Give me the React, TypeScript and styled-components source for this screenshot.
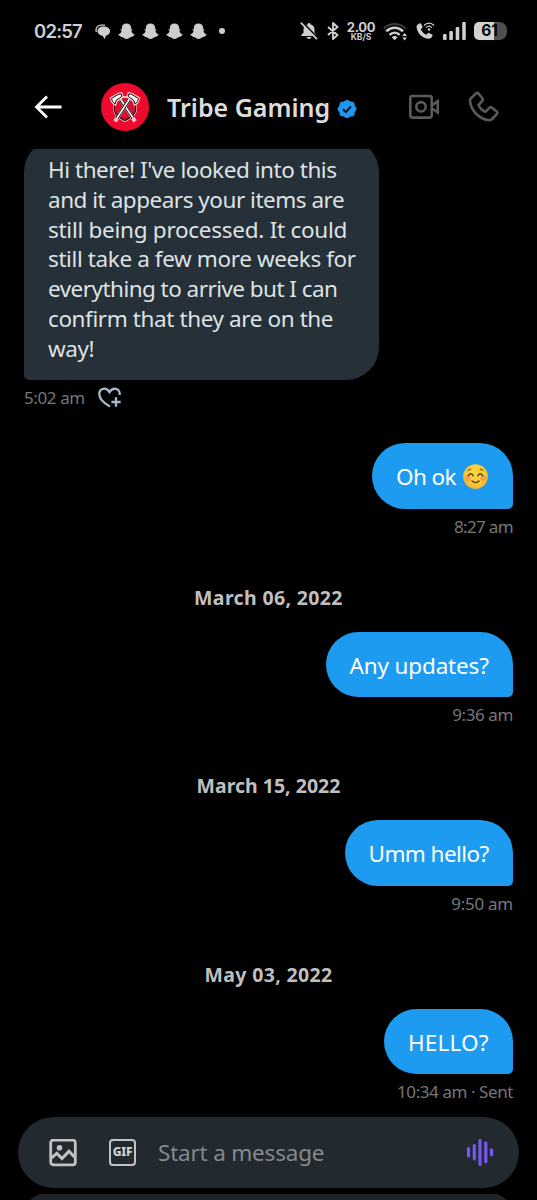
import React from "react";
import styled, { createGlobalStyle } from "styled-components";

const GlobalStyle = createGlobalStyle`
  *, *::before, *::after { box-sizing: border-box; }
  html, body { margin: 0; padding: 0; background: #000; }
  body { overflow: hidden; }
  svg { display: block; flex: none; }
`;

const Screen = styled.div`
  width: 537px;
  height: 1200px;
  overflow: hidden;
  background: #000;
  display: flex;
  flex-direction: column;
  font-family: "Noto Sans", "Open Sans", sans-serif;
  color: #dcdcdc;
`;

const StatusBar = styled.div`
  height: 62px;
  flex: none;
  padding: 0 30px 0 34px;
  display: flex;
  align-items: center;
  color: #cfcfcf;
  font-family: Inter, sans-serif;
`;

const Clock = styled.span`
  width: 61px;
  font-size: 18.5px;
  font-weight: 600;
  letter-spacing: -0.8px;
  white-space: nowrap;
`;

const Notifications = styled.div`
  display: flex;
  align-items: center;
  gap: 7px;
`;

const MoreDot = styled.span`
  width: 6px;
  height: 6px;
  margin-left: 5px;
  border-radius: 50%;
  background: #cfcfcf;
`;

const Indicators = styled.div`
  margin-left: auto;
  display: flex;
  align-items: center;
`;

const Speed = styled.div`
  width: 30px;
  margin: 0 7px 0 7px;
  display: flex;
  flex-direction: column;
  align-items: center;
  font-weight: 700;
  white-space: nowrap;
`;

const SpeedValue = styled.span`
  font-size: 13px;
  line-height: 12px;
  letter-spacing: -0.3px;
`;

const SpeedUnit = styled.span`
  font-size: 8.5px;
  line-height: 9px;
`;

const Battery = styled.div`
  width: 33px;
  height: 18px;
  margin-left: 8px;
  padding-right: 2px;
  border-radius: 5px 8px 8px 5px;
  background: linear-gradient(90deg, #d2d2d2 0 20px, #505050 20px);
  color: #080808;
  font-size: 15.5px;
  font-weight: 700;
  line-height: 18px;
  text-align: center;
`;

const Header = styled.header`
  height: 87px;
  flex: none;
  padding: 3px 38px 0 33px;
  display: flex;
  align-items: center;
`;

const Avatar = styled.div`
  width: 48px;
  height: 48px;
  margin: 0 18px 0 38px;
  border-radius: 50%;
  background: #ee0a2c;
  overflow: hidden;
`;

const Name = styled.h1`
  margin: 0 8px 0 0;
  width: 162px;
  font-size: 25px;
  font-weight: 600;
  line-height: 32px;
  white-space: nowrap;
`;

const Actions = styled.div`
  margin-left: auto;
  display: flex;
  align-items: center;
  gap: 28px;
`;

const Thread = styled.main`
  height: 968px;
  flex: none;
  padding: 0 24px;
  overflow: hidden;
  display: flex;
  flex-direction: column;
`;

const Bubble = styled.div<{ $sent?: boolean }>`
  flex: none;
  align-self: ${(p) => (p.$sent ? "flex-end" : "flex-start")};
  height: ${(p) => (p.$sent ? "65.5px" : "241px")};
  width: ${(p) => (p.$sent ? "auto" : "355px")};
  margin-top: ${(p) => (p.$sent ? "0" : "-10px")};
  padding: ${(p) => (p.$sent ? "19px 24px 17px" : "16px 0 0 24px")};
  border-radius: ${(p) => (p.$sent ? "33px 33px 5px 33px" : "33px 33px 33px 5px")};
  background: ${(p) => (p.$sent ? "#1d9bf0" : "#253038")};
  color: ${(p) => (p.$sent ? "#fff" : "#dfe2e4")};
  font-size: 22.5px;
  line-height: 29.83px;
  white-space: nowrap;
  display: flex;
  flex-direction: ${(p) => (p.$sent ? "row" : "column")};
`;

const Line = styled.span<{ $spacing?: number; $width?: number }>`
  display: block;
  letter-spacing: ${(p) => p.$spacing ?? 0}px;
  width: ${(p) => (p.$width ? `${p.$width}px` : "auto")};
`;

const Meta = styled.div<{ $sent?: boolean; $spacing?: number }>`
  height: ${(p) => (p.$sent ? "37px" : "63px")};
  flex: none;
  display: flex;
  align-items: flex-start;
  justify-content: ${(p) => (p.$sent ? "flex-end" : "flex-start")};
  gap: 13px;
  padding-top: 6px;
  font-size: 17px;
  line-height: 23px;
  letter-spacing: ${(p) => p.$spacing ?? -0.4}px;
  color: #74777a;
  white-space: nowrap;
`;

const DateDivider = styled.div<{ $spacing: number }>`
  height: 86px;
  flex: none;
  padding-top: 39px;
  text-align: center;
  font-size: 19.5px;
  font-weight: 700;
  line-height: 26px;
  letter-spacing: ${(p) => p.$spacing}px;
  color: #bfbfbf;
`;

const Composer = styled.div`
  width: 501px;
  height: 71px;
  flex: none;
  margin: 0 18px;
  padding: 0 25px 0 31px;
  border-radius: 36px;
  background: #22292f;
  display: flex;
  align-items: center;
`;

const Placeholder = styled.span`
  flex: 1;
  margin-left: 22px;
  font-size: 22.5px;
  letter-spacing: -0.2px;
  color: #858a8e;
  white-space: nowrap;
`;

const IconGap = styled.span`
  width: 32px;
`;

const NextPanel = styled.div`
  height: 6px;
  flex: none;
  margin-top: 6px;
  padding: 0 18px;
  overflow: hidden;
`;

const NextPanelBody = styled.div`
  height: 72px;
  margin-top: -3px;
  border-radius: 36px;
  background: #1d2327;
`;

const ChatGlyph = () => (
  <svg width="16" height="16" viewBox="0 0 16 16" style={{ marginTop: 1 }}>
    <path d="M1.500 8C.3 5.300 1.500 1.500 5.500 1.100h4.500" fill="none" stroke="#cfcfcf" strokeWidth="1.300" />
    <path d="M8.800 2.400c3.700 0 6.300 1.800 6.300 4.700 0 2.400-1.700 4.200-4.200 4.700L9.500 15.300 7.900 12C4.700 11.600 2.500 9.700 2.500 7.100c0-2.900 2.600-4.700 6.300-4.700z" fill="#cfcfcf" />
  </svg>
);

const Ghost = () => (
  <svg width="17" height="17" viewBox="0 0 17 17">
    <path
      d="M8.500.5c2.800 0 4.700 1.700 4.700 4.400v1.500l1.200-.2c.5.600 0 1-1.100 1.600.4 1.900 1.500 2.900 3.300 3.600.2 1-.9 1.300-2 1.500l-.4 1.300c-1.600-.3-2.200 0-3 .7-1.500 1.300-3.900 1.300-5.400 0-.8-.7-1.400-1-3-.7l-.4-1.300c-1.100-.2-2.200-.5-2-1.500 1.800-.7 2.900-1.700 3.300-3.600C2.600 7.200 2.100 6.800 2.600 6.200l1.200.2V4.900C3.800 2.200 5.700.5 8.500.5z"
      fill="#cfcfcf"
    />
  </svg>
);

const Muted = () => (
  <svg width="18" height="18" viewBox="0 0 18 18">
    <path d="M1.500 14V12.500l2-1.700V7.200C3.500 4.700 5.200 3 7.600 2.600c.1-2 2.800-2 2.900 0C13 3.100 14.500 5 14.500 7.300v3.500l1.600 1.700V14z" fill="#cfcfcf" />
    <path d="M6.500 15h5c-.5 2.600-4.500 2.600-5 0z" fill="#cfcfcf" />
    <path d="M2.300.2l15.500 16" stroke="#000" strokeWidth="2" />
    <path d="M.8.700l16.200 16.500" stroke="#cfcfcf" strokeWidth="1.700" />
  </svg>
);

const Bluetooth = () => (
  <svg width="12" height="18" viewBox="0 0 12 18" style={{ marginLeft: 9 }}>
    <path d="M1 5l9.500 8L6 17V1l4.500 4L1 13" fill="none" stroke="#cfcfcf" strokeWidth="1.900" strokeLinejoin="round" />
  </svg>
);

const Wifi = () => (
  <svg width="25" height="19" viewBox="0 0 25 19">
    <g fill="none">
      <path d="M.8 6.500C6.700.500 16.500.500 22.500 6.500" stroke="#3c3c3c" strokeWidth="2" />
      <path d="M3.300 9.300c4.800-4.700 11.900-4.700 16.700 0" stroke="#cfcfcf" strokeWidth="2.600" />
      <path d="M6.500 12.900c3-2.900 7.200-2.900 10.200 0" stroke="#cfcfcf" strokeWidth="2.500" />
    </g>
    <path d="M8.700 15.300c1.700-1.600 4.100-1.600 5.800 0L11.600 18.300z" fill="#cfcfcf" />
    <path d="M19.200 14l2.400-2.900L24 14zM19.200 15.600H24L21.600 18.500z" fill="#cfcfcf" />
  </svg>
);

const WifiCall = () => (
  <svg width="19" height="18" viewBox="0 0 19 18" style={{ marginLeft: 8 }}>
    <path d="M1.400 2.800L4 1.300c.6-.3 1 0 1.200.5l1.300 3.100c.2.500 0 .9-.4 1.200L4.800 7.300c1.100 2.500 2.900 4.200 5.600 5.400l1.400-1.500c.4-.4.8-.4 1.200-.2l3.100 1.500c.5.300.6.700.4 1.200-.8 2.200-2.300 3.200-4.400 3C6.200 16.200 1 11 .6 5.300c0-1.100.2-2 .8-2.500z" fill="#cfcfcf" />
    <g fill="none" stroke="#cfcfcf" strokeWidth="1.200">
      <path d="M8 3.500c2.800-3.100 7.200-3.100 10 0M10 5.700c1.800-1.800 4.200-1.800 6 0" />
    </g>
    <circle cx="13" cy="7.500" r="1.200" fill="#cfcfcf" />
  </svg>
);

const Signal = () => (
  <svg width="23" height="18" viewBox="0 0 23 18" style={{ marginLeft: 8 }}>
    <g fill="#cfcfcf">
      <rect x="0" y="12" width="3.600" height="6" rx="1" />
      <rect x="6.300" y="9" width="3.600" height="9" rx="1" />
      <rect x="12.700" y="5" width="3.600" height="13" rx="1" />
      <rect x="19.200" y="0" width="3.600" height="18" rx="1" />
    </g>
  </svg>
);

const BackArrow = () => (
  <svg width="30" height="26" viewBox="0 0 30 26">
    <path d="M14 2.500L3.500 13 14 23.500M3.500 13H28.500" fill="none" stroke="#fff" strokeWidth="2.800" />
  </svg>
);

const Axe = () => (
  <>
    <path d="M17.500 13L34 38.300" stroke="#f1c4c9" strokeWidth="4" />
    <path d="M17.500 13L32 35" stroke="#23080d" strokeWidth="3.400" />
    <path d="M17.500 13L32 35" stroke="#fff" strokeWidth="1.600" />
    <path
      d="M20.500 9.800L17 10.800 9.700 15c.4 3 2 5.500 4.700 7l1.500-4.300 3-1.800 2.700-2.300z"
      fill="#fff" stroke="#f1c4c9" strokeWidth="1.800"
    />
    <path
      d="M20.200 10.800L17.200 11.500 10.500 15.500c.5 2.300 1.700 4.200 3.500 5.300l1.300-3.700 3.200-2 2.300-2z"
      fill="#fff" stroke="#23080d" strokeWidth="1"
    />
  </>
);

const Axes = () => (
  <svg width="48" height="48" viewBox="0 0 48 48">
    <path d="M13.500 20v9c1.500 4.500 6 6.500 10.500 9 4.500-2.500 9-4.500 10.500-9v-9L28 14h-8z" fill="#df0c2d" stroke="#f1b3bb" strokeWidth="2.200" />
    <path d="M13.800 20v8.500c1.500 4.500 5.700 6.500 10.200 8.800 4.500-2.300 8.700-4.300 10.200-8.800V20" fill="none" stroke="#35080f" strokeWidth="1.500" />
    <Axe />
    <g transform="translate(48 0) scale(-1 1)">
      <Axe />
    </g>
  </svg>
);

const Verified = () => (
  <svg width="20" height="20" viewBox="1 1 20 20" style={{ marginTop: 3 }}>
    <path
      d="M20.400 11c0-1.300-.7-2.400-1.800-3 .4-1.200.1-2.600-.8-3.500s-2.200-1.200-3.500-.8c-.6-1.100-1.800-1.800-3.200-1.800s-2.600.7-3.200 1.800c-1.300-.4-2.600-.1-3.500.8S3.200 6.800 3.600 8C2.400 8.600 1.600 9.700 1.600 11s.8 2.400 2 3c-.4 1.200-.1 2.600.8 3.500s2.200 1.200 3.500.8c.6 1.100 1.800 1.800 3.200 1.800s2.600-.7 3.200-1.800c1.300.4 2.600.1 3.500-.8s1.200-2.300.8-3.500c1.100-.6 1.800-1.700 1.800-3z"
      fill="#2196ee"
    />
    <path d="M7 11.200l2.900 2.900L15 8.400" fill="none" stroke="#08131c" strokeWidth="2" />
  </svg>
);

const VideoCam = () => (
  <svg width="32" height="26" viewBox="0 0 32 26">
    <g fill="none" stroke="#5a5a5a" strokeWidth="2.600">
      <rect x="2.300" y="2" width="21.400" height="21.600" rx="2" />
      <circle cx="13" cy="12.800" r="4.700" />
      <path d="M23.700 11.500l6-4.300v11.300l-6-4.200" />
    </g>
  </svg>
);

const Phone = () => (
  <svg width="31" height="32" viewBox="0 0 31 32">
    <path
      d="M3 7.200L8 2.400c.8-.8 1.800-.7 2.600.2l3.700 4.700c.7.900.7 1.700 0 2.600L10.500 14c1.300 3 3.700 5.400 7 6.800l3.900-3.900c.8-.8 1.700-.9 2.600-.2l4.700 3.700c.9.800 1 1.700.2 2.600l-4.700 5c-.8.900-1.800 1.300-3 1.200C11.500 28.300 3 20 2 9.900c-.1-1.200.2-1.900 1-2.700z"
      fill="none" stroke="#5a5a5a" strokeWidth="2.600" strokeLinejoin="round"
    />
  </svg>
);

const HeartPlus = () => (
  <svg width="23" height="21" viewBox="0 0 24 22" style={{ marginTop: 1 }}>
    <g fill="none" stroke="#a3bacb" strokeWidth="2.400">
      <path d="M12.500 20.500C5.500 16.500 1.300 12.300 1.300 7.300 1.300 1.400 8.500-.4 12 5.300 15.500-.4 22.700 1.400 22.700 7.500v1" />
      <path d="M18.800 10.800v9.800M14 15.700h9.700" />
    </g>
  </svg>
);

const Smile = () => (
  <svg width="27" height="27" viewBox="0 0 27 27" role="img" aria-label="☺️" style={{ margin: "1px 0 0 5px" }}>
    <defs>
      <radialGradient id="face" cx=".5" cy=".4" r=".6">
        <stop offset=".5" stopColor="#ffd23b" />
        <stop offset="1" stopColor="#f5b52d" />
      </radialGradient>
    </defs>
    <circle cx="13.500" cy="13.500" r="12.300" fill="url(#face)" />
    <circle cx="5.700" cy="15.300" r="3.200" fill="#f88a4b" opacity=".6" />
    <circle cx="21.300" cy="15.300" r="3.200" fill="#f88a4b" opacity=".6" />
    <g fill="none" stroke="#553c1b" strokeWidth="1.500" strokeLinecap="round">
      <path d="M6.300 12.800c1-2.800 3.900-2.800 4.800 0M15.900 12.800c1-2.800 3.900-2.800 4.800 0M10 18c2 2 5 2 7 0" />
      <path d="M5.500 7.800c.9-1.100 2-1.600 3.300-1.700M21.500 7.800c-.9-1.100-2-1.600-3.300-1.700" strokeWidth="1" />
    </g>
  </svg>
);

const Gallery = () => (
  <svg width="28" height="28" viewBox="0 0 28 28">
    <rect x="1.700" y="1.200" width="24.600" height="24.600" rx="2.500" fill="none" stroke="#c0c3c5" strokeWidth="2.800" />
    <circle cx="10.500" cy="8.800" r="2.800" fill="#c0c3c5" />
    <path d="M2 19.500l5.800-5.200 5.200 5.200 7-7.300 6 6.300" fill="none" stroke="#c0c3c5" strokeWidth="3" />
  </svg>
);

const GifFrame = styled.span`
  width: 27px;
  height: 27px;
  margin-bottom: 1px;
  border: 2.800px solid #c0c3c5;
  border-radius: 4px;
  color: #d0d2d4;
  font: 800 12px/22px "Noto Sans", sans-serif;
  letter-spacing: -0.300px;
  white-space: nowrap;
  display: flex;
  justify-content: center;
`;

const Voice = () => (
  <svg width="28" height="28" viewBox="0 0 28 28">
    <g stroke="#7558ef" strokeWidth="3.200" strokeLinecap="round">
      <path d="M2.500 9.500v7.500M8.300 6.500v13.500M14 1.500v24M19.800 3.800v19M25.600 10.800v5" />
    </g>
  </svg>
);

const intro: [string, number][] = [
  ["Hi there! I've looked into this", -0.45],
  ["and it appears your items are", -0.48],
  ["still being processed. It could", -0.27],
  ["still take a few more weeks for", -0.39],
  ["everything to arrive but I can", -0.54],
  ["confirm that they are on the", -0.4],
  ["way!", -0.4],
];

const dated = [
  { date: "March 06, 2022", dateSpacing: 0.36, text: "Any updates?", width: 139.5, spacing: -0.15, meta: "9:36 am", metaSpacing: -0.4 },
  { date: "March 15, 2022", dateSpacing: 0, text: "Umm hello?", width: 120.5, spacing: -0.57, meta: "9:50 am", metaSpacing: -0.25 },
  { date: "May 03, 2022", dateSpacing: 0.33, text: "HELLO?", width: 81, spacing: 0.15, meta: "10:34 am · Sent", metaSpacing: -0.42 },
];

export default function App() {
  return (
    <Screen>
      <GlobalStyle />
      <StatusBar>
        <Clock>02:57</Clock>
        <Notifications>
          <ChatGlyph />
          <Ghost />
          <Ghost />
          <Ghost />
          <Ghost />
          <MoreDot />
        </Notifications>
        <Indicators>
          <Muted />
          <Bluetooth />
          <Speed>
            <SpeedValue>2.00</SpeedValue>
            <SpeedUnit>KB/S</SpeedUnit>
          </Speed>
          <Wifi />
          <WifiCall />
          <Signal />
          <Battery>61</Battery>
        </Indicators>
      </StatusBar>
      <Header>
        <BackArrow />
        <Avatar>
          <Axes />
        </Avatar>
        <Name>Tribe Gaming</Name>
        <Verified />
        <Actions>
          <VideoCam />
          <Phone />
        </Actions>
      </Header>
      <Thread>
        <Bubble>
          {intro.map(([text, spacing]) => (
            <Line key={text} $spacing={spacing}>{text}</Line>
          ))}
        </Bubble>
        <Meta>
          5:02 am
          <HeartPlus />
        </Meta>
        <Bubble $sent>
          <Line $width={61} $spacing={-0.6}>Oh ok</Line>
          <Smile />
        </Bubble>
        <Meta $sent $spacing={-0.65}>8:27 am</Meta>
        {dated.map((m) => (
          <React.Fragment key={m.date}>
            <DateDivider $spacing={m.dateSpacing}>{m.date}</DateDivider>
            <Bubble $sent>
              <Line $width={m.width} $spacing={m.spacing}>{m.text}</Line>
            </Bubble>
            <Meta $sent $spacing={m.metaSpacing}>{m.meta}</Meta>
          </React.Fragment>
        ))}
      </Thread>
      <Composer>
        <Gallery />
        <IconGap />
        <GifFrame>GIF</GifFrame>
        <Placeholder>Start a message</Placeholder>
        <Voice />
      </Composer>
      <NextPanel>
        <NextPanelBody />
      </NextPanel>
    </Screen>
  );
}
